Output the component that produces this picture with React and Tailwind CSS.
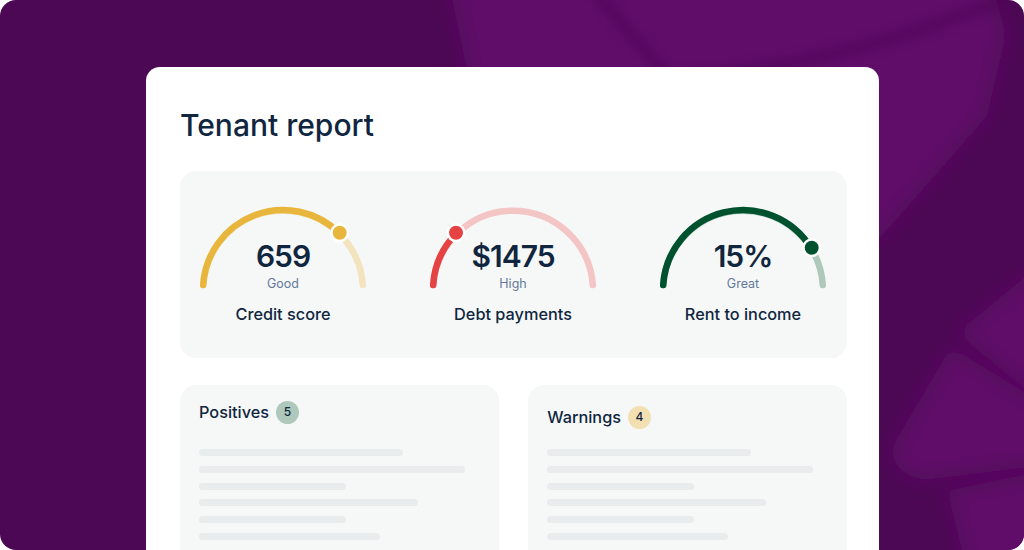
import React from 'react';

const gauges = [
  { value: '659', rating: 'Good', label: 'Credit score', color: '#e8b63c', light: '#f3e4bd', dot: [141.7, 27.7] },
  { value: '$1475', rating: 'High', label: 'Debt payments', color: '#e54343', light: '#f4c5c5', dot: [28, 27.7] },
  { value: '15%', rating: 'Great', label: 'Rent to income', color: '#00512e', light: '#aec8bc', dot: [153.7, 42.7] },
];

const bars = ['w-[204px]', 'w-[266px]', 'w-[147px]', 'w-[219px]', 'w-[147px]', 'w-[181px]'];

// end of the coloured track, taken on the circle under the dot
function trackEnd(x, y) {
  const dx = x - 85;
  const dy = y - 85;
  const len = Math.sqrt(dx * dx + dy * dy);
  return [85 + (dx / len) * 80, 85 + (dy / len) * 80];
}

function Gauge({ gauge }) {
  const [x, y] = gauge.dot;
  const [endX, endY] = trackEnd(x, y);
  return (
    <div className="relative flex w-[170px] flex-col items-center whitespace-nowrap pt-[33px]">
      <svg className="absolute left-0 top-0 h-[100px] w-[170px]" viewBox="0 0 170 100" fill="none">
        <path d="M5.2 80 A80 80 0 0 1 164.8 80" stroke={gauge.light} strokeWidth="6.5" strokeLinecap="round" />
        <path d={'M5.2 80 A80 80 0 0 1 ' + endX + ' ' + endY} stroke={gauge.color} strokeWidth="6.5" strokeLinecap="round" />
        <circle cx={x} cy={y} r="9.5" fill="#ffffff" />
        <circle cx={x} cy={y} r="7" fill={gauge.color} />
      </svg>
      <div className="text-[30px] font-semibold leading-[36px] tracking-[-1px] text-[#10263f]">{gauge.value}</div>
      <div className="mt-[1px] text-[12.5px] leading-[18px] text-[#64799a]">{gauge.rating}</div>
      <div className="mt-[9px] text-[16.3px] font-medium leading-[24px] text-[#10263f]">{gauge.label}</div>
    </div>
  );
}

function ListCard({ title, count, badge, top, below }) {
  return (
    <div className={'h-[200px] flex-1 rounded-t-2xl bg-[#f6f8f7] px-[19px] ' + top}>
      <div className={'flex h-[24px] items-center gap-[7px] ' + below}>
        <span className="text-[16.3px] font-medium text-[#10263f]">{title}</span>
        <span className={'flex h-[23px] w-[23px] items-center justify-center rounded-full text-[12px] font-medium text-[#10263f] ' + badge}>
          {count}
        </span>
      </div>
      <div className="flex flex-col gap-[9.8px]">
        {bars.map((w, i) => (
          <div key={i} className={'h-[7px] rounded-full bg-[#e9eced] ' + w} />
        ))}
      </div>
    </div>
  );
}

export default function App() {
  return (
    <div className="relative h-[550px] w-[1024px] overflow-hidden rounded-2xl bg-[#4c0854] font-['Inter',sans-serif]">
      {/* blurred shapes behind the card */}
      <svg className="absolute left-0 top-0 h-[550px] w-[1024px]" viewBox="0 0 1024 550" fill="#5e0b68">
        <defs>
          <filter id="soft" x="-15%" y="-15%" width="130%" height="130%">
            <feGaussianBlur stdDeviation="9" />
          </filter>
          <filter id="thin" x="-10%" y="-30%" width="120%" height="160%">
            <feGaussianBlur stdDeviation="6" />
          </filter>
        </defs>
        <path d="M444 -40 L470 85 L500 300 L878 240 L940 170 L987 116 L1006 35 L985 -40 Z" filter="url(#soft)" />
        <path d="M1070 240 L957 333 L1070 426 Z" filter="url(#soft)" />
        <path d="M951 347 L891 449 Q895 475 924 480 L1070 462 L1070 420 Z" filter="url(#soft)" />
        <path d="M947 491 L1070 465 L1070 590 L972 590 Z" filter="url(#soft)" />
        <path d="M595 -8 L672 82 M679 78 Q830 65 958 16 L1010 0" stroke="#4c0854" strokeWidth="7" strokeOpacity="0.8" fill="none" filter="url(#thin)" />
      </svg>
      <div className="relative ml-[146px] mt-[67px] h-[500px] w-[733px] rounded-[14px] bg-white px-[34px] pt-[36px]">
        <h1 className="text-[30px] font-medium leading-[44px] text-[#10263f]">Tenant report</h1>
        <div className="mt-[24px] flex h-[187px] w-[667px] justify-center gap-[60px] rounded-2xl bg-[#f6f8f7] pr-[1px] pt-[34px]">
          {gauges.map((g) => (
            <Gauge key={g.label} gauge={g} />
          ))}
        </div>
        <div className="mt-[27px] flex w-[667px] gap-[29.5px]">
          <ListCard title="Positives" count="5" badge="bg-[#aec8bc]" top="pt-[15px]" below="mb-[25px]" />
          <ListCard title="Warnings" count="4" badge="bg-[#f3e0b2]" top="pt-[20px]" below="mb-[20px]" />
        </div>
      </div>
    </div>
  );
}
